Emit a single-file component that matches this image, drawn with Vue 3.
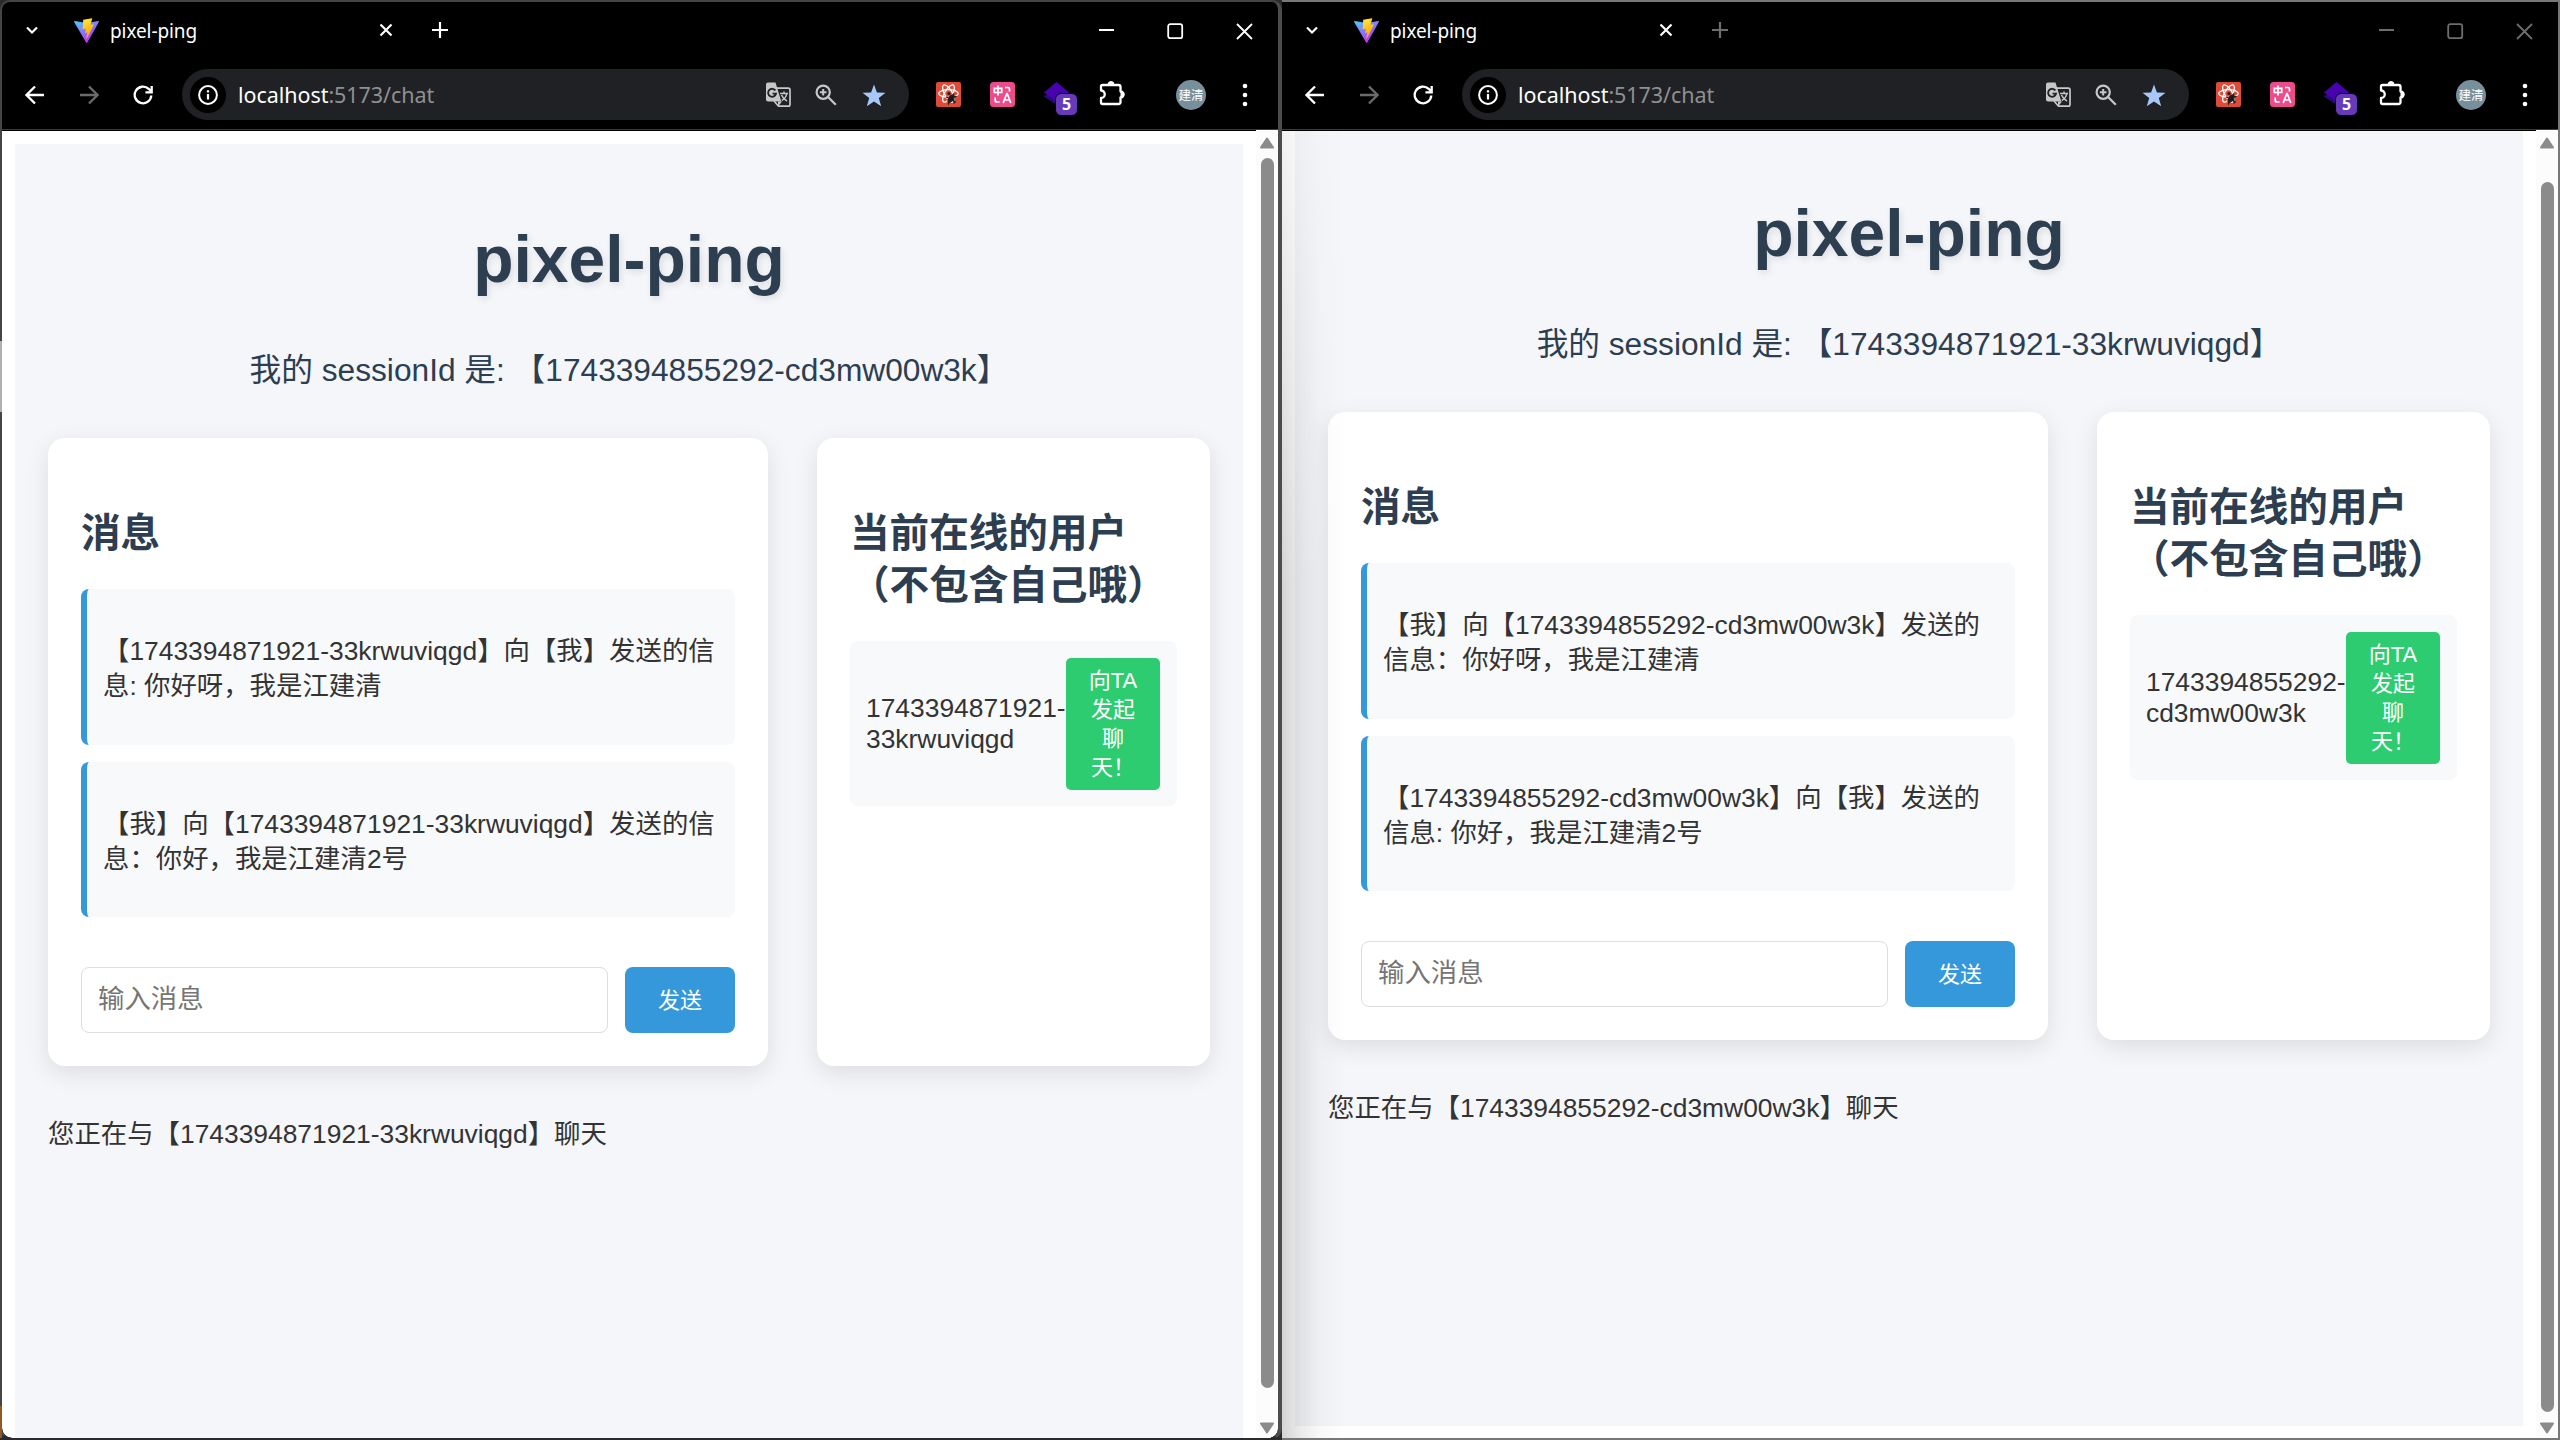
<script setup>
const windows = [
  {
    id: 'left',
    title: 'pixel-ping',
    session: '1743394855292-cd3mw00w3k',
    messages: [
      ['【1743394871921-33krwuviqgd】向【我】发送的信', '息: 你好呀，我是江建清'],
      ['【我】向【1743394871921-33krwuviqgd】发送的信', '息：你好，我是江建清2号'],
    ],
    user: ['1743394871921-', '33krwuviqgd'],
    peer: '1743394871921-33krwuviqgd',
  },
  {
    id: 'right',
    title: 'pixel-ping',
    session: '1743394871921-33krwuviqgd',
    messages: [
      ['【我】向【1743394855292-cd3mw00w3k】发送的', '信息：你好呀，我是江建清'],
      ['【1743394855292-cd3mw00w3k】向【我】发送的', '信息: 你好，我是江建清2号'],
    ],
    user: ['1743394855292-', 'cd3mw00w3k'],
    peer: '1743394855292-cd3mw00w3k',
  },
]
const inviteLines = ['向TA', '发起', '聊', '天！']
</script>

<template>
  <main class="desktop">
    <section v-for="w in windows" :key="w.id" class="window" :class="w.id">
      <header class="tabbar">
        <svg class="chevron" width="14" height="14" viewBox="0 0 14 14"><path d="M2 4.500l5 5 5-5" /></svg>
        <svg class="favicon" width="25" height="25" viewBox="0 0 32 32">
          <defs>
            <linearGradient :id="'va' + w.id" x1="0" x2="0.55" y1="0" y2="0.9"><stop offset="0" stop-color="#41d1ff" /><stop offset="1" stop-color="#bd34fe" /></linearGradient>
            <linearGradient :id="'vb' + w.id" x1="0.4" x2="0.6" y1="0" y2="0.9"><stop offset="0" stop-color="#ffea83" /><stop offset="0.1" stop-color="#ffdd35" /><stop offset="1" stop-color="#ffa800" /></linearGradient>
          </defs>
          <path :fill="`url(#va${w.id})`" d="M31.8 5.1L17 31.5c-.3.6-1.1.6-1.5 0L.2 5.1c-.4-.7.2-1.4.9-1.3l14.9 2.7h.3l14.600-2.700c.8-.1 1.300.7.9 1.300z" />
          <path :fill="`url(#vb${w.id})`" d="M23 .2L12.100 2.300c-.2 0-.3.2-.3.4l-.7 11.400c0 .3.200.500.500.4l3-.700c.300-.1.500.2.500.5l-.9 4.400c-.1.3.2.500.5.400l1.900-.6c.300-.1.600.2.500.500l-1.400 6.900c-.1.4.500.7.700.3l.2-.2 8.700-17.500c.100-.3-.1-.6-.4-.500l-3.100.6c-.3.100-.5-.2-.500-.500l2-7c.1-.3-.1-.6-.3-.9z" />
        </svg>
        <span class="tab-title">{{ w.title }}</span>
        <svg class="tab-close" width="14" height="14" viewBox="0 0 14 14"><path d="M1.500 1.500l11 11M12.500 1.500l-11 11" /></svg>
        <svg class="tab-new" width="16" height="16" viewBox="0 0 16 16"><path d="M8 0v16M0 8h16" /></svg>
        <span class="spacer"></span>
        <div class="controls">
          <svg width="17" height="17" viewBox="0 0 17 17"><path d="M1 7h15" /></svg>
          <svg width="17" height="17" viewBox="0 0 17 17"><rect x="1.200" y="1.200" width="14" height="14" rx="2" /></svg>
          <svg width="17" height="17" viewBox="0 0 17 17"><path d="M1 1l15 15M16 1L1 16" /></svg>
        </div>
      </header>

      <nav class="toolbar">
        <svg class="nav-icon" width="20" height="20" viewBox="0 0 20 20"><path d="M19 10H2M10 1.500L1.500 10l8.500 8.500" /></svg>
        <svg class="nav-icon dim" width="20" height="20" viewBox="0 0 20 20"><path d="M1 10h17M10 1.500l8.500 8.500-8.500 8.500" /></svg>
        <svg class="nav-icon" width="20" height="20" viewBox="0 0 20 20"><path d="M18.300 10.500a8.300 8.300 0 1 1-2.600-6.600L18.500 6.500M18.700 1v6.300h-6.300" /></svg>
        <div class="omnibox">
          <span class="info">
            <svg width="22" height="22" viewBox="0 0 22 22"><circle cx="11" cy="11" r="8.900" fill="none" stroke="#fff" stroke-width="2" /><path d="M11 10v5.500M11 6.200v2.300" stroke="#fff" stroke-width="2.200" /></svg>
          </span>
          <span class="url"><b>localhost</b>:5173/chat</span>
          <span class="spacer"></span>
          <svg class="translate" width="25" height="26" viewBox="0 0 25 26">
            <path d="M9 6.200h13.300q1.700 0 1.700 1.700v14.600q0 1.700-1.700 1.700H12.500L8 19" fill="none" stroke="#c7c7c7" stroke-width="1.700" />
            <path d="M2 .5h7.500l5.800 19H2Q0 19.500 0 17.500v-15Q0 .5 2 .5z" fill="#c7c7c7" />
            <path d="M12 19.500h4l-4 5z" fill="#c7c7c7" />
            <path d="M9.400 8.500A4 4 0 1 0 10 11.700H6.600" fill="none" stroke="#202124" stroke-width="1.800" />
            <path d="M14 11.500h8M18 9.500v2M20.800 11.500c-.5 3-2.500 5.500-5 7M15.500 13c1 2.500 3 4.500 5.500 6" fill="none" stroke="#c7c7c7" stroke-width="1.500" />
          </svg>
          <svg class="magnifier" width="22" height="22" viewBox="0 0 22 22"><g fill="none" stroke="#c7c7c7" stroke-width="2.200"><circle cx="8.200" cy="8.200" r="6.600" /><path d="M13 13l7.800 7.800" /><path d="M8.200 4.900v6.600M4.900 8.200h6.600" stroke-width="2" /></g></svg>
          <svg class="star" width="24" height="23" viewBox="0 0 24 23"><path fill="#a8c7fa" d="M12 .5l2.900 7.900 8.600.3-6.700 5.200 2.400 8.300L12 17.400l-7.200 4.800 2.400-8.300L.5 8.700l8.600-.3z" /></svg>
        </div>
        <svg class="ext ext-react" width="25" height="25" viewBox="0 0 25 25">
          <rect width="25" height="25" rx="2" fill="#dd4b39" />
          <g fill="none" stroke="#fff" stroke-width="1.300"><ellipse cx="12.500" cy="11.500" rx="9.800" ry="3.800" /><ellipse cx="12.500" cy="11.500" rx="9.800" ry="3.800" transform="rotate(60 12.500 11.500)" /><ellipse cx="12.500" cy="11.500" rx="9.800" ry="3.800" transform="rotate(120 12.500 11.500)" /></g>
          <g stroke="#231a1a" stroke-linecap="round" fill="#231a1a"><ellipse cx="15" cy="16.500" rx="2.700" ry="4.600" transform="rotate(35 15 16.500)" stroke="none" /><circle cx="13" cy="11.500" r="1.600" stroke="none" /><path d="M10.500 15l9 5M17.500 12l.5 9M12.500 22l1-5M20 14.500l-6 1" stroke-width="1.400" /></g>
        </svg>
        <svg class="ext ext-pink" width="25" height="25" viewBox="0 0 25 25">
          <rect width="25" height="25" rx="3.500" fill="#ec4c8b" />
          <g fill="none" stroke="#fff" stroke-width="1.700"><path d="M4.300 6.300h7.400v4.200H4.300zM8 3.500v10M15 5.500h3q1.500 0 1.500 1.500v2.500M5.200 15.500v2.500q0 2 2 2h2.500" /><path d="M13.200 21l3.600-9.500h.4l3.600 9.500M14.300 18h5.400" /></g>
        </svg>
        <span class="ext-stack">
          <svg width="28" height="28" viewBox="0 0 28 28"><path d="M0 14.500l6-4 10 8v6.500z" fill="#2a0a86" /><path d="M12.500 0L25 10.500 12.500 19.500 0 10.500z" fill="#4803b0" /></svg>
          <b class="badge">5</b>
        </span>
        <svg class="puzzle" width="27" height="27" viewBox="0 0 27 27"><path d="M3.500 5h16q2 0 2 2v4.500a3 3 0 0 1 0 6V22q0 2-2 2h-16q-1.500 0-1.500-1.500v-4.500a3.600 3.600 0 0 0 0-7.500V6.500Q2 5 3.500 5z" fill="none" stroke="#fff" stroke-width="2.300" stroke-linejoin="round" /><path d="M9 4.500a3 3 0 0 1 6 0zM22 11.500a3 3 0 0 1 0 6z" fill="#fff" stroke="#fff" /></svg>
        <span class="avatar">建清</span>
        <svg class="dots" width="6" height="24" viewBox="0 0 6 24"><circle cx="3" cy="3" r="2.300" /><circle cx="3" cy="12" r="2.300" /><circle cx="3" cy="21" r="2.300" /></svg>
      </nav>

      <div class="viewport">
        <div class="page">
          <h1>pixel-ping</h1>
          <p class="session">我的 sessionId 是: 【{{ w.session }}】</p>
          <div class="columns">
            <div class="card chat">
              <h2>消息</h2>
              <div class="messages">
                <p v-for="(m, i) in w.messages" :key="i" class="message">
                  <span v-for="line in m" :key="line">{{ line }}</span>
                </p>
              </div>
              <div class="composer">
                <div class="field">输入消息</div>
                <button class="send">发送</button>
              </div>
            </div>
            <div class="card users">
              <h2>当前在线的用户<br />（不包含自己哦）</h2>
              <div class="user">
                <span class="uid"><span v-for="part in w.user" :key="part">{{ part }}</span></span>
                <button class="invite"><span v-for="line in inviteLines" :key="line">{{ line }}</span></button>
              </div>
            </div>
          </div>
          <p class="status">您正在与【{{ w.peer }}】聊天</p>
        </div>
        <div class="scrollbar">
          <svg width="16" height="12" viewBox="0 0 16 12"><path d="M8 1.500L14 10.500H2z" /></svg>
          <div class="track"><div class="thumb"></div></div>
          <svg width="16" height="12" viewBox="0 0 16 12"><path d="M2 1.500h12L8 10.500z" /></svg>
        </div>
      </div>
    </section>
    <span class="edge"></span>
  </main>
</template>

<style>
body { margin: 0; background: #2c2a2e; overflow: hidden; }
</style>

<style scoped>
* { box-sizing: border-box; }
.desktop {
  position: relative;
  display: flex;
  width: 2560px;
  height: 1440px;
  background: #2c2a2e;
  font-family: "Liberation Sans", "Noto Sans CJK SC", sans-serif;
  color: #333;
}
/* sliver of the desktop visible along the left window's edge */
.edge {
  position: absolute;
  left: 0;
  top: 180px;
  width: 2px;
  height: 1258px;
  background: linear-gradient(#454545 161px, #b0b0ac 161px 232px, #454545 232px 1226px, #8f5a22 1226px);
}
.window {
  display: flex;
  flex-direction: column;
  height: 1440px;
  flex: none;
  border-style: solid;
  border-color: #454545;
  border-width: 2px 4px 2px 2px;
  background: #000;
  overflow: hidden;
}
.left { width: 1282px; border-radius: 10px 10px 12px 12px; border-bottom-color: #2c2a2e; border-right-color: #4c4c4c; }
.right { width: 1278px; border-width: 2px 2px 2px 0; border-color: #777; }
.spacer { flex: 1; }

.tabbar { display: flex; align-items: center; height: 58px; flex: none; color: #fff; }
.tabbar svg { flex: none; fill: none; stroke: #fff; stroke-width: 2.200; }
.tabbar .chevron { margin-left: 23px; margin-top: -2px; }
.tabbar .favicon { margin-left: 35px; margin-top: -2px; stroke: none; }
.tabbar .favicon path { stroke: none; }
.tab-title { width: 269px; margin-left: 11px; font: 19px "Noto Sans", sans-serif; letter-spacing: -.1px; white-space: nowrap; }
.tabbar .tab-close { margin-top: -2px; }
.tabbar .tab-new { margin-left: 39px; margin-top: -2px; }
.controls { display: flex; gap: 52px; margin-right: 25px; }
.tabbar .controls svg { stroke-width: 1.800; }
.tabbar .controls svg:first-child { stroke-width: 2; }
.right .controls svg, .right .tab-new { stroke: #6d6d6d; }

.toolbar { display: flex; align-items: center; height: 69px; flex: none; }
.nav-icon { margin-left: 34px; fill: none; stroke: #fff; stroke-width: 2.300; flex: none; }
.nav-icon:first-child { margin-left: 23px; }
.nav-icon.dim { stroke: #6b6b6b; }
.omnibox {
  display: flex;
  align-items: center;
  width: 727px;
  height: 51px;
  margin-left: 29px;
  padding: 0 23px 0 8px;
  border-radius: 26px;
  background: #202125;
  flex: none;
}
.info { display: grid; place-items: center; width: 36px; height: 36px; border-radius: 50%; background: #000; }
.url { margin-left: 12px; margin-top: -1px; font: 21.500px "Noto Sans", sans-serif; letter-spacing: -.05px; color: #8f9092; white-space: nowrap; }
.url b { font-weight: 400; color: #fff; }
.magnifier { margin-left: 24px; }
.star { margin-left: 25px; margin-top: 2px; }
.ext-react { margin-left: 27px; }
.ext-pink { margin-left: 29px; }
.ext-stack { position: relative; width: 28px; height: 28px; margin-left: 29px; margin-top: 3px; }
.ext-stack svg { display: block; }
.badge {
  position: absolute;
  left: 11px;
  top: 11px;
  width: 23px;
  height: 23px;
  border: 1px solid #000;
  border-radius: 6px;
  background: #673ab7;
  color: #fff;
  font: 700 16px/21px "Noto Sans", sans-serif;
  text-align: center;
}
.puzzle { margin-left: 27px; margin-top: -3px; }
.avatar {
  width: 30px;
  height: 30px;
  margin-left: 50px;
  border-radius: 50%;
  background: #78909c;
  color: #fff;
  font: 12.500px/29px "Noto Sans CJK SC", sans-serif;
  text-align: center;
}
.dots { margin-left: 36px; fill: #fff; }

.viewport { position: relative; display: flex; justify-content: space-between; flex: 1; min-height: 0; border-top: 1px solid #3c3c3c; background: #fff; overflow: hidden; box-shadow: inset 0 1px #000; }
.page { width: 1228px; height: 1400px; margin: 14px 0 0 13px; padding: 33px; background: #f5f6fa; flex: none; }
.left .viewport { border-radius: 0 0 10px 10px; }
.right .page { height: 1295px; margin-top: 1px; padding-top: 20px; }
.right .viewport::before {
  content: "";
  position: absolute;
  inset: 0 auto 0 0;
  z-index: 2;
  width: 64px;
  background: linear-gradient(90deg, rgba(0, 0, 0, .17), rgba(0, 0, 0, .08) 30%, rgba(0, 0, 0, .025) 60%, transparent);
  -webkit-mask-image: linear-gradient(rgba(0, 0, 0, .3), #000 35%);
  mask-image: linear-gradient(rgba(0, 0, 0, .3), #000 35%);
}
h1 { margin: 44px 0 0; font-size: 66px; line-height: 76px; color: #2c3e50; text-align: center; text-shadow: 2px 3px 7px rgba(0, 0, 0, .1); }
.session { margin: 52px 0 0; font-size: 31.680px; line-height: 42px; color: #2c3e50; text-align: center; white-space: nowrap; }
.columns { display: flex; gap: 49px; margin-top: 47px; }
.card { height: 628px; padding: 33px; border-radius: 17px; background: #fff; box-shadow: 0 7px 25px rgba(0, 0, 0, .1); }
.chat { width: 720px; }
.users { width: 393px; }
h2 { margin: 33px 0; padding-top: 3px; margin-bottom: 30px; font-size: 39.600px; line-height: 52px; color: #2c3e50; white-space: nowrap; }
.messages { display: flex; flex-direction: column; gap: 17px; }
.message {
  display: flex;
  flex-direction: column;
  height: 155.500px;
  margin: 0;
  padding: 45px 0 0 16px;
  border-left: 6px solid #3498db;
  border-radius: 8px;
  background: #f8f9fb;
  font-size: 26.400px;
  line-height: 35px;
  white-space: nowrap;
}
.composer { display: flex; gap: 17px; margin-top: 50px; }
.field { width: 527px; height: 66px; padding-left: 16px; border: 1px solid #ddd; border-radius: 8px; font-size: 26.400px; line-height: 63px; color: #757575; }
button { margin: 0; border: 0; color: #fff; font: 22px/29px "Liberation Sans", "Noto Sans CJK SC", sans-serif; }
.send { width: 110px; height: 66px; padding: 1px 0 0; border-radius: 8px; background: #3498db; }
.user { display: flex; align-items: center; height: 165px; padding: 0 16px; border-radius: 8px; background: #f8f9fb; }
.uid { display: flex; flex-direction: column; width: 200px; font-size: 26.400px; line-height: 31px; white-space: nowrap; }
.invite { display: flex; flex-direction: column; align-items: center; justify-content: center; width: 94px; height: 132px; padding: 1px 0 0; border-radius: 5px; background: #2ecc71; }
.status { margin: 51px 0 0; font-size: 26.400px; line-height: 35px; white-space: nowrap; }

.scrollbar { display: flex; flex-direction: column; align-items: center; width: 22px; height: 1308px; padding: 7px 0 4px; background: #fcfcfc; fill: #8b8b8b; flex: none; }
.scrollbar svg { stroke: #8b8b8b; stroke-width: 2; stroke-linejoin: round; flex: none; }
.track { flex: 1; padding-top: 9px; }
.thumb { width: 13px; height: 1230px; border-radius: 7px; background: #8b8b8b; }
.right .track { padding-top: 33px; }
</style>
